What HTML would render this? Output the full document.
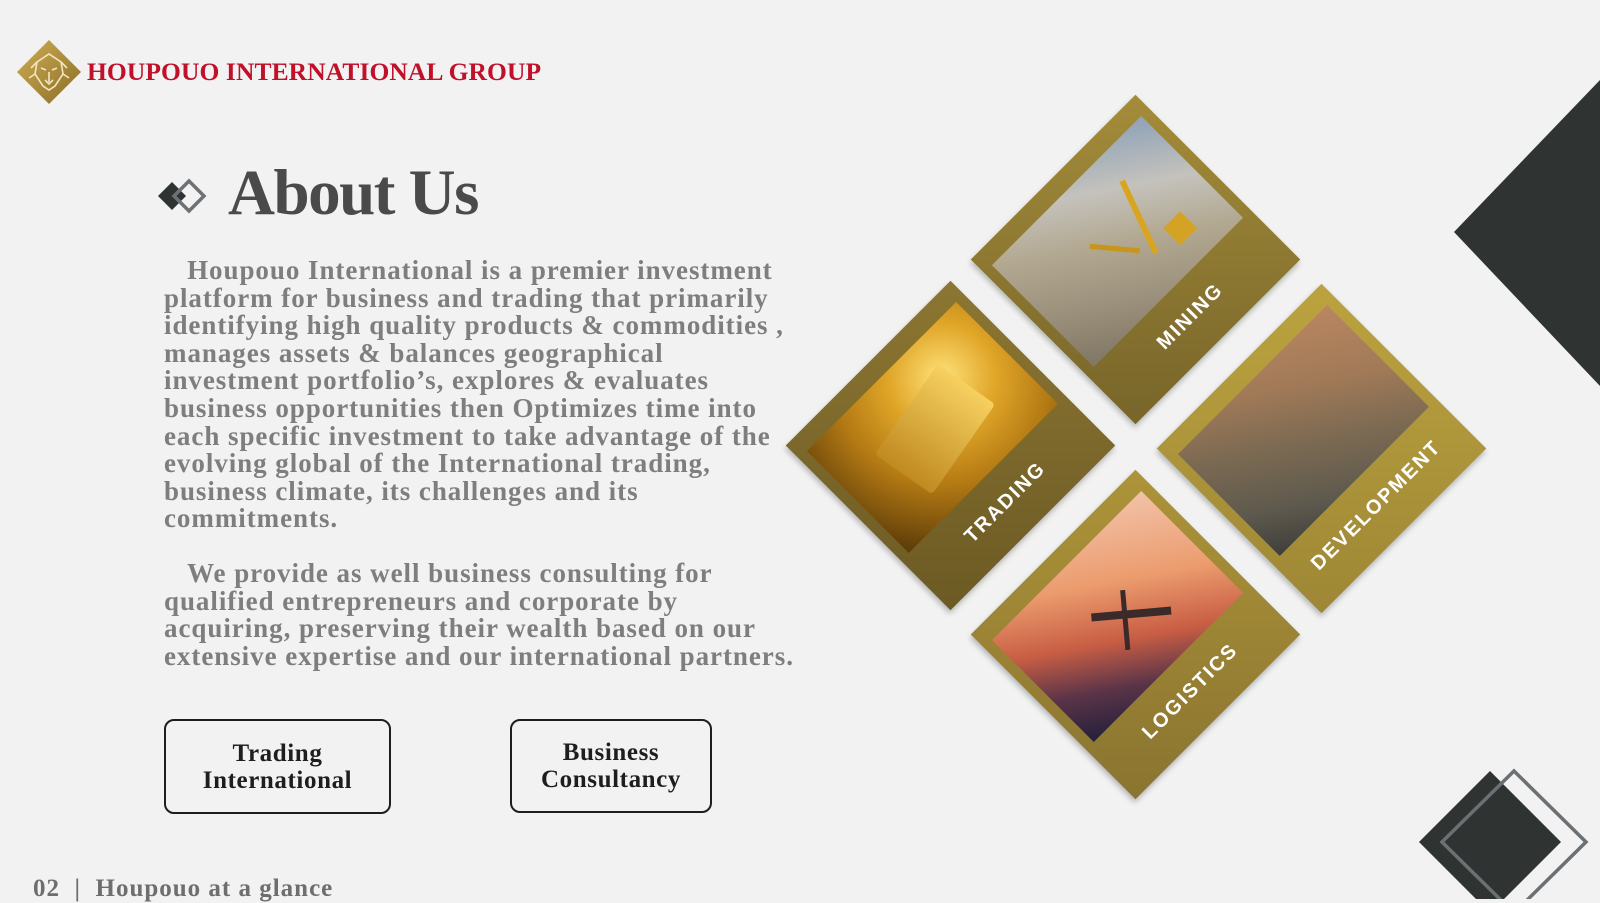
<!DOCTYPE html>
<html><head><meta charset="utf-8"><style>
*{margin:0;padding:0;box-sizing:border-box}
body{width:1600px;height:899px;overflow:hidden;background:#f2f2f2;position:relative;font-family:"Liberation Serif",serif}
.a{position:absolute}
.brand{left:87px;top:57px;font-size:25.5px;font-weight:bold;color:#c0102a;white-space:nowrap;letter-spacing:0.1px}
.title{left:228px;top:153px;font-size:65px;font-weight:bold;color:#4a4a4a;letter-spacing:-1.5px;line-height:80px}
.p{left:164px;font-size:27px;font-weight:bold;color:#7e7e7e;line-height:27.6px;white-space:nowrap;letter-spacing:0.95px}
.btn{border:2.5px solid #1e1e1e;border-radius:10px;font-size:25px;font-weight:bold;color:#1e1e1e;text-align:center;line-height:27px;display:flex;align-items:center;justify-content:center;letter-spacing:0.6px}
.card{position:absolute;width:233px;height:233px;transform:rotate(45deg);box-shadow:2px 3px 6px rgba(0,0,0,.25)}
.ph{position:absolute;left:19px;top:11px;width:144px;height:211px;overflow:hidden}
.lb{position:absolute;left:196px;top:118px;transform:translate(-50%,-50%) rotate(-90deg);font-family:"Liberation Sans",sans-serif;font-weight:bold;color:#fff;font-size:20px;letter-spacing:2px;white-space:nowrap}
</style></head><body>

<svg class="a" style="left:15px;top:38px" width="68" height="68" viewBox="0 0 68 68">
<defs><linearGradient id="g" x1="0" y1="0" x2="1" y2="1"><stop offset="0" stop-color="#d0ae55"/><stop offset="1" stop-color="#8a6c26"/></linearGradient></defs>
<polygon points="34,2 66,34 34,66 2,34" fill="url(#g)"/>
<g fill="none" stroke="#f2e6c0" stroke-width="1.6">
<path d="M22,24 L34,16 L46,24 L48,36 L40,48 L34,52 L28,48 L20,36 Z"/>
<path d="M26,30 L31,32 M42,30 L37,32 M30,42 L34,46 L38,42 M34,34 L34,44 M16,30 L22,24 M52,30 L46,24 M14,40 L20,36 M54,40 L48,36"/>
</g></svg>
<div class="a brand">HOUPOUO INTERNATIONAL GROUP</div>

<svg class="a" style="left:155px;top:176px" width="52" height="40" viewBox="0 0 52 40">
<polygon points="3,20 17,6 31,20 17,34" fill="#2f3332"/>
<polygon points="34,5 49,20 34,35 19,20" fill="none" stroke="#6e7276" stroke-width="3.5"/>
</svg>
<div class="a title">About Us</div>

<div class="a p" style="top:257px">&nbsp;&nbsp;&nbsp;Houpouo International is a premier investment<br>platform for business and trading that primarily<br>identifying high quality products &amp; commodities ,<br>manages assets &amp; balances geographical<br>investment portfolio’s, explores &amp; evaluates<br>business opportunities then Optimizes time into<br>each specific investment to take advantage of the<br>evolving global of the International trading,<br>business climate, its challenges and its<br>commitments.</div>
<div class="a p" style="top:560px">&nbsp;&nbsp;&nbsp;We provide as well business consulting for<br>qualified entrepreneurs and corporate by<br>acquiring, preserving their wealth based on our<br>extensive expertise and our international partners.</div>

<div class="a btn" style="left:164px;top:719px;width:227px;height:95px">Trading<br>International</div>
<div class="a btn" style="left:510px;top:719px;width:202px;height:94px">Business<br>Consultancy</div>

<div class="a" style="left:33px;top:875px;font-size:25px;font-weight:bold;color:#6e6e6e;white-space:nowrap;letter-spacing:1px">02&nbsp;&nbsp;|&nbsp; Houpouo at a glance</div>

<div class="card" style="left:1019px;top:143px;background:linear-gradient(to bottom right,#a48c3a,#77652a)">
 <div class="ph" style="background:linear-gradient(to bottom right,#8fa2b8 0%,#c4c2bc 28%,#b3a992 50%,#9c917c 75%,#7f7664 100%)">
  <div class="a" style="left:30px;top:70px;width:80px;height:6px;background:#d9a520;transform:rotate(20deg)"></div>
  <div class="a" style="left:50px;top:110px;width:50px;height:5px;background:#c8951a;transform:rotate(-40deg)"></div>
  <div class="a" style="left:95px;top:40px;width:24px;height:24px;background:#d4a224"></div>
 </div>
 <div class="lb">MINING</div>
</div>
<div class="card" style="left:834px;top:329px;background:linear-gradient(to bottom right,#8c7632,#6c5a24)">
 <div class="ph" style="background:radial-gradient(circle at 30% 30%,#ffe27a 0%,#e0a628 30%,#b47a14 60%,#5a3a08 100%)">
  <div class="a" style="left:40px;top:50px;width:70px;height:110px;background:linear-gradient(#f6d060,#c08a20);transform:rotate(-10deg);border-radius:4px"></div>
 </div>
 <div class="lb">TRADING</div>
</div>
<div class="card" style="left:1205px;top:332px;background:linear-gradient(to bottom right,#bca33f,#9e8735)">
 <div class="ph" style="background:linear-gradient(to bottom right,#b98660 0%,#a27a58 30%,#7c6a52 55%,#5f5a4e 80%,#3e3e3a 100%)"></div>
 <div class="lb">DEVELOPMENT</div>
</div>
<div class="card" style="left:1019px;top:518px;background:linear-gradient(to bottom right,#ad9439,#8a7430)">
 <div class="ph" style="background:linear-gradient(to bottom right,#f2c2a8 0%,#ec9c6e 35%,#c85e44 60%,#5a3448 80%,#24203a 100%)">
  <div class="a" style="left:40px;top:90px;width:80px;height:8px;background:#3a2a2a;transform:rotate(-50deg)"></div>
  <div class="a" style="left:50px;top:100px;width:60px;height:5px;background:#3a2a2a;transform:rotate(40deg)"></div>
 </div>
 <div class="lb">LOGISTICS</div>
</div>

<svg class="a" style="left:0;top:0" width="1600" height="899">
<polygon points="1600,80 1454,232 1600,386" fill="#2f3332"/>
<polygon points="1490,771 1561,842 1490,913 1419,842" fill="#2f3332"/>
<polygon points="1514,771 1586,842 1514,913 1442,842" fill="none" stroke="#6b7074" stroke-width="3.5"/>
</svg>
</body></html>
